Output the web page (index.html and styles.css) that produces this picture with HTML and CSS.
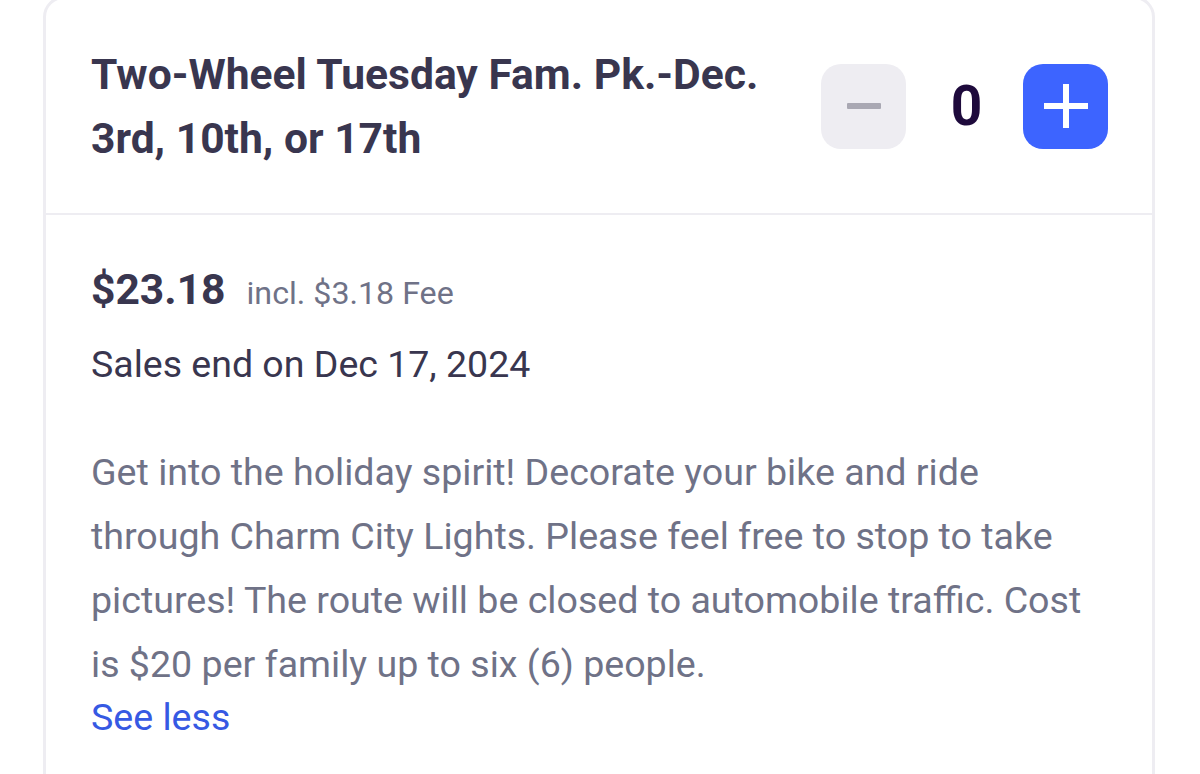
FILE: index.html
```html
<!DOCTYPE html>
<html lang="en">
<head>
<meta charset="utf-8">
<title>Ticket</title>
<link rel="stylesheet" href="styles.css">
</head>
<body>
<div class="card">
  <div class="card-head">
    <h2 class="title">Two-Wheel Tuesday Fam. Pk.-Dec. 3rd, 10th, or 17th</h2>
    <div class="stepper">
      <button class="step step-minus" aria-label="Decrease">
        <svg width="34" height="6" viewBox="0 0 34 6"><rect x="0" y="0" width="34" height="6" rx="1" fill="#a9a8b3"/></svg>
      </button>
      <div class="count">0</div>
      <button class="step step-plus" aria-label="Increase">
        <svg width="44" height="44" viewBox="0 0 44 44"><rect x="19" y="0" width="6" height="44" fill="#fff"/><rect x="0" y="19" width="44" height="6" fill="#fff"/></svg>
      </button>
    </div>
  </div>
  <div class="card-body">
    <div class="price-row">
      <span class="price">$23.18</span>
      <span class="fee">incl. $3.18 Fee</span>
    </div>
    <div class="sales">Sales end on Dec 17, 2024</div>
    <p class="desc">Get into the holiday spirit! Decorate your bike and ride through Charm City Lights. Please feel free to stop to take pictures! The route will be closed to automobile traffic. Cost is $20 per family up to six (6) people.</p>
    <a class="see-less" href="#">See less</a>
  </div>
</div>
</body>
</html>
```
FILE: styles.css
```css
html, body {
  margin: 0;
  padding: 0;
  background: #ffffff;
  overflow: hidden;
}
body {
  font-family: Roboto, "Liberation Sans", Arial, sans-serif;
  color: #39364f;
  padding: 0 45px 0 43px;
}
.card {
  margin-top: -4px;
  border: 3px solid #eeedf2;
  border-radius: 21px;
  background: #fff;
  height: 900px;
}
.card-head {
  display: flex;
  align-items: center;
  justify-content: space-between;
  padding: 43px 44px 43px 45px;
  border-bottom: 2px solid #eeedf2;
  gap: 40px;
}
.title {
  margin: 0;
  font-size: 42.6px;
  line-height: 64px;
  font-weight: 700;
  color: #39364f;
  flex: 1;
}
.stepper {
  display: flex;
  align-items: center;
}
.step {
  width: 85px;
  height: 85px;
  border: none;
  border-radius: 20px;
  padding: 0;
  display: flex;
  align-items: center;
  justify-content: center;
  cursor: pointer;
}
.step-minus { background: #eeedf2; }
.step-plus { background: #3d64ff; }
.count {
  width: 117px;
  text-align: center;
  font-size: 55px;
  font-weight: 700;
  color: #1e0a3c;
  line-height: 85px;
  padding-left: 4px;
  box-sizing: border-box;
}
.card-body {
  padding: 43px 45px 0 45px;
}
.price-row {
  display: flex;
  align-items: baseline;
  line-height: 63px;
}
.price {
  font-size: 42.6px;
  font-weight: 700;
  color: #39364f;
}
.fee {
  font-size: 32.2px;
  color: #6f7287;
  margin-left: 21px;
}
.sales {
  margin-top: 12px;
  font-size: 37.5px;
  line-height: 55px;
  color: #39364f;
}
.desc {
  margin: 48px 0 0 0;
  font-size: 37.6px;
  line-height: 64px;
  color: #6f7287;
}
.see-less {
  display: block;
  font-size: 37.6px;
  line-height: 42px;
  color: #3659e3;
  text-decoration: none;
}
```
